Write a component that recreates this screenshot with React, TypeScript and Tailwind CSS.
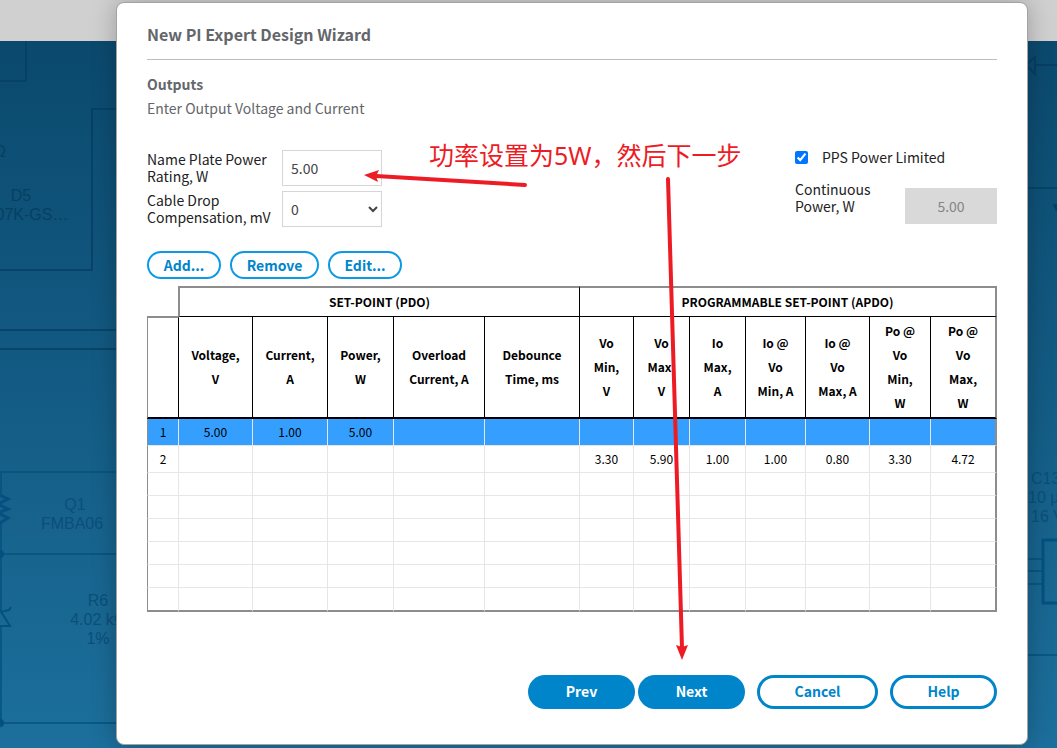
import React from 'react';

const columns = [
  { id: 'voltage', lines: ['Voltage,', 'V'], width: 74 },
  { id: 'current', lines: ['Current,', 'A'], width: 75 },
  { id: 'power', lines: ['Power,', 'W'], width: 66 },
  { id: 'overload', lines: ['Overload', 'Current, A'], width: 91 },
  { id: 'debounce', lines: ['Debounce', 'Time, ms'], width: 95 },
  { id: 'vomin', lines: ['Vo', 'Min,', 'V'], width: 54 },
  { id: 'vomax', lines: ['Vo', 'Max,', 'V'], width: 56 },
  { id: 'iomax', lines: ['Io', 'Max,', 'A'], width: 56 },
  { id: 'iovomin', lines: ['Io @', 'Vo', 'Min, A'], width: 60 },
  { id: 'iovomax', lines: ['Io @', 'Vo', 'Max, A'], width: 64 },
  { id: 'povomin', lines: ['Po @', 'Vo', 'Min,', 'W'], width: 61 },
  { id: 'povomax', lines: ['Po @', 'Vo', 'Max,', 'W'], width: 66 },
];

const rows = [
  ['1', '5.00', '1.00', '5.00', '', '', '', '', '', '', '', '', ''],
  ['2', '', '', '', '', '', '3.30', '5.90', '1.00', '1.00', '0.80', '3.30', '4.72'],
];

const emptyRows = [1, 2, 3, 4, 5, 6];

// Dimmed circuit behind the dialog
const Schematic = () => (
  <div className="absolute inset-0 overflow-hidden" aria-hidden="true">
    <svg className="absolute left-0 top-0" width="130" height="748" fill="none" stroke="#063f63" strokeWidth="2">
      <path d="M26 41V81H0M130 109H92V270H0M0 330H130M0 349H130" strokeWidth="1.5" />
      <path d="M130 472H1V494M1 523V612M0 554H130M1 627V723H130" stroke="#045180" strokeWidth="1.5" />
      <path d="M0 495L8 499L-2 504L8 509L-2 513L8 518L0 523" stroke="#045180" strokeWidth="3" />
      <path d="M0 612L9 610L11 607M0 610L10 626H0" stroke="#045180" strokeWidth="2" />
      <circle cx="0" cy="554" r="4" fill="#045180" stroke="none" />
      <circle cx="0" cy="723" r="4" fill="#045180" stroke="none" />
      <g fill="#063f63" stroke="none" textAnchor="middle" className="font-['Liberation_Sans',sans-serif] text-[16px]">
        <text x="0" y="157">Ω</text>
        <text x="21" y="201">D5</text>
        <text x="32" y="220">07K-GS…</text>
        <g fill="#0b4f7a">
          <text x="75" y="510">Q1</text>
          <text x="72" y="529">FMBA06</text>
          <text x="98" y="606">R6</text>
          <text x="98" y="625">4.02 kΩ</text>
          <text x="98" y="644">1%</text>
        </g>
      </g>
    </svg>
    <svg className="absolute right-0 top-0" width="37" height="748" fill="none" stroke="#063f63" strokeWidth="1.5">
      <path d="M16 65H37M6 65L15 57V74Z" strokeWidth="2" />
      <path d="M0 188H37" />
      <path d="M0 655H37M0 559H22M0 571H22M0 584H22" stroke="#045180" />
      <path d="M37 540H23V603H37" stroke="#045180" strokeWidth="3" />
      <path d="M34 205H37V211Z" fill="#063f63" />
      <g fill="#0b4f7a" stroke="none" className="font-['Liberation_Sans',sans-serif] text-[16px]">
        <text x="11" y="484">C13</text>
        <text x="8" y="503">10 µF</text>
        <text x="11" y="522">16 V</text>
      </g>
    </svg>
  </div>
);

const Annotation = () => (
  <div className="pointer-events-none absolute left-[243px] top-[133px] text-[#ed1c24]">
    <p className="ml-[69px] whitespace-nowrap font-['Noto_Sans','Noto_Sans_CJK_SC',sans-serif] text-[25px] leading-[38px]">
      功率设置为5W，然后下一步
    </p>
    <svg className="absolute left-0 top-0" width="340" height="530" viewBox="360 136 340 530" stroke="currentColor" strokeWidth="4" strokeLinecap="round">
      <path d="M525 185L376 176M668 179L682 648" />
      <path d="M364 175L379 170L376 176L378 182Z" fill="currentColor" stroke="none" />
      <path d="M682 660L676 645L682 647L688 645Z" fill="currentColor" stroke="none" />
    </svg>
  </div>
);

const SetPointTable = () => (
  <table className="mt-[7px] w-full table-fixed border-separate border-spacing-0 text-center text-[12px] text-black">
    <colgroup>
      <col style={{ width: 32 }} />
      {columns.map((col) => (
        <col key={col.id} style={{ width: col.width }} />
      ))}
    </colgroup>
    <thead className="font-bold leading-6">
      <tr className="h-[31px]">
        <td className="border-r border-b border-[#8d8d8d]"></td>
        <th colSpan={5} className="border-t-2 border-r border-b border-l border-t-[#8d8d8d] border-r-black border-b-black border-l-[#8d8d8d] p-0">
          SET-POINT (PDO)
        </th>
        <th colSpan={7} className="border-t-2 border-r-2 border-b border-t-[#8d8d8d] border-r-[#8d8d8d] border-b-black p-0">
          PROGRAMMABLE SET-POINT (APDO)
        </th>
      </tr>
      <tr className="h-[102px]">
        <td className="border-t border-r border-b-2 border-l border-t-[#8d8d8d] border-r-black border-b-black border-l-[#8d8d8d]"></td>
        {columns.map((col) => (
          <th key={col.id} className="border-r border-b-2 border-black p-0 last:border-r-2 last:border-r-[#8d8d8d]">
            {col.lines.map((line) => (
              <div key={line}>{line}</div>
            ))}
          </th>
        ))}
      </tr>
    </thead>
    <tbody>
      {rows.map((row) => (
        <tr key={row[0]} className="h-[27px] first:bg-[#359fff]">
          {row.map((value, i) => (
            <td
              key={i}
              className="border-r border-b border-[#e6e6e6] p-0 first:border-l first:border-l-[#8d8d8d] last:border-r-2 last:border-r-[#8d8d8d]"
            >
              {value}
            </td>
          ))}
        </tr>
      ))}
      {emptyRows.map((n) => (
        <tr key={n} className="group h-[23px] last:h-6">
          {['row', ...columns.map((col) => col.id)].map((id) => (
            <td
              key={id}
              className="border-r border-b border-[#e6e6e6] p-0 first:border-l first:border-l-[#8d8d8d] last:border-r-2 last:border-r-[#8d8d8d] group-last:border-b-2 group-last:border-b-[#8d8d8d]"
            ></td>
          ))}
        </tr>
      ))}
    </tbody>
  </table>
);

const App = () => {
  const small = "h-7 rounded-full border-2 border-[#0c9ae6] pb-[2px] text-[14px] font-bold leading-6 text-[#0085cb]";
  const filled = "h-[34px] w-[107px] rounded-full bg-[#0085cb] pb-[2px] text-[14px] font-bold text-white";
  const outlined = "h-[34px] rounded-full border-[3px] border-[#0085cb] pb-[2px] text-[14px] font-bold text-[#0085cb]";

  return (
    <div className="relative min-h-screen overflow-hidden bg-linear-to-b from-[#0a476b] to-[#1c6f9c] font-['Noto_Sans_CJK_SC',sans-serif] text-[14px] text-[#222]">
      <Schematic />
      <div className="absolute inset-x-0 top-0 h-[41px] bg-[#d0d0d0]"></div>

      <div className="relative mt-[2px] mr-[29px] mb-[3px] ml-[116px] rounded-lg border border-[#a3a3a3] bg-white px-[30px] pb-[35px] shadow-[0_0_24px_rgba(0,0,0,0.25)]">
        <h1 className="border-b border-[#bdbdbd] pt-[19px] pb-[13px] text-[16px] font-bold leading-6 text-[#63666a]">
          New PI Expert Design Wizard
        </h1>

        <div className="mt-3 leading-6 text-[#63666a]">
          <h2 className="font-bold">Outputs</h2>
          <p>Enter Output Voltage and Current</p>
        </div>

        <div className="mt-[30px] flex justify-between">
          <div className="flex flex-col gap-[5px]">
            <div className="flex">
              <label htmlFor="rating" className="w-[135px] pt-px leading-[17px]">
                Name Plate Power<br />Rating, W
              </label>
              <input id="rating" type="text" defaultValue="5.00" className="h-9 w-[100px] border border-[#d5d5d5] px-2 text-[#444]" />
            </div>
            <div className="flex">
              <label htmlFor="drop" className="w-[135px] pt-px leading-[17px]">
                Cable Drop<br />Compensation, mV
              </label>
              <select id="drop" defaultValue="0" className="h-9 w-[100px] border border-[#d5d5d5] bg-white px-1 text-[#444]">
                <option>0</option>
              </select>
            </div>
          </div>

          <div className="w-[202px]">
            <label className="flex h-[14px] items-center gap-[14px]">
              <input type="checkbox" defaultChecked className="h-[13px] w-[13px]" />
              PPS Power Limited
            </label>
            <div className="mt-[17px] flex justify-between">
              <label htmlFor="continuous" className="leading-[17px]">
                Continuous<br />Power, W
              </label>
              <input id="continuous" type="text" disabled defaultValue="5.00" className="mt-[7px] h-9 w-[92px] bg-[#d9d9d9] text-center text-[#858585]" />
            </div>
          </div>
        </div>

        <div className="mt-6 flex gap-[9px]">
          <button className={`w-[74px] ${small}`}>Add...</button>
          <button className={`w-[89px] ${small}`}>Remove</button>
          <button className={`w-[74px] ${small}`}>Edit...</button>
        </div>

        <SetPointTable />

        <div className="mt-[63px] flex justify-end gap-3">
          <div className="flex gap-[3px]">
            <button className={filled}>Prev</button>
            <button className={filled}>Next</button>
          </div>
          <button className={`w-[121px] ${outlined}`}>Cancel</button>
          <button className={`w-[107px] ${outlined}`}>Help</button>
        </div>

        <Annotation />
      </div>
    </div>
  );
};

export default App;
